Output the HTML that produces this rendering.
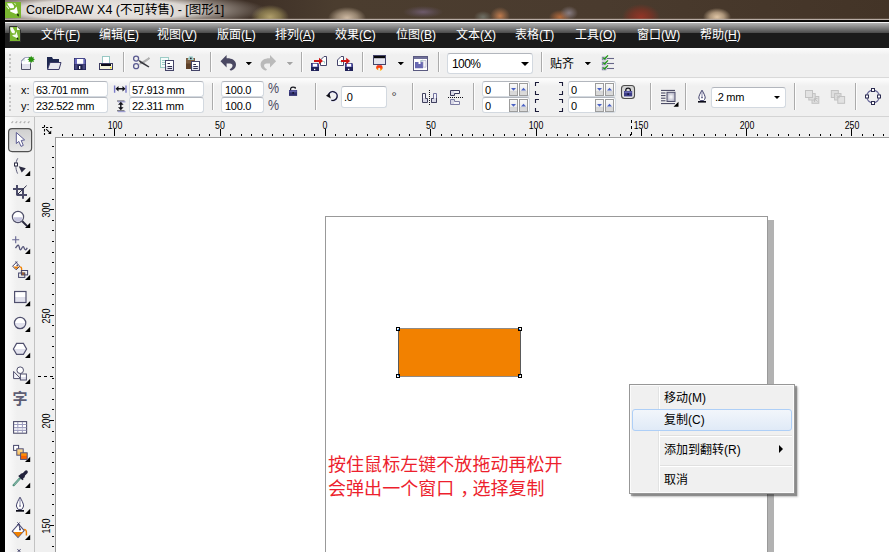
<!DOCTYPE html>
<html lang="zh-CN">
<head>
<meta charset="utf-8">
<title>CorelDRAW X4</title>
<style>
html,body{margin:0;padding:0;}
body{width:889px;height:552px;overflow:hidden;position:relative;background:#fff;font-family:"Liberation Sans","Noto Sans CJK SC",sans-serif;font-size:12px;color:#000;}
div,span,svg{position:absolute;box-sizing:border-box;}
svg{overflow:visible;}
#leftstrip{left:0;top:0;width:5px;height:552px;background:#000;}
#title{left:5px;top:0;width:884px;height:22px;overflow:hidden;background:
linear-gradient(rgba(0,0,0,0) 0,rgba(0,0,0,0) 18px,rgba(190,178,170,.35) 19px,#b8aca4 19px,#b8aca4 20px,#0c0a08 20px,#0c0a08 22px),
radial-gradient(ellipse 140px 17px at 100px 10px,rgba(240,236,232,.98) 0,rgba(232,228,224,.93) 62%,rgba(200,192,184,.55) 85%,rgba(120,105,95,0) 115%),
radial-gradient(ellipse 19px 12px at 265px 17px,rgba(196,178,118,.85) 0,rgba(170,155,95,.6) 55%,rgba(120,105,70,0) 100%),
radial-gradient(ellipse 19px 11px at 342px 18px,rgba(222,200,176,.9) 0,rgba(200,180,155,.6) 55%,rgba(120,105,90,0) 100%),
radial-gradient(ellipse 20px 6px at 418px 12px,rgba(118,98,122,.8) 0,rgba(100,84,100,.4) 60%,rgba(80,66,70,0) 100%),
radial-gradient(ellipse 10px 9px at 495px 16px,rgba(205,130,80,.9) 0,rgba(160,110,75,.5) 60%,rgba(90,70,50,0) 100%),
radial-gradient(ellipse 9px 6px at 478px 17px,rgba(120,125,115,.8) 0,rgba(90,85,75,0) 100%),
radial-gradient(ellipse 9px 7px at 564px 13px,rgba(150,140,150,.8) 0,rgba(90,80,80,0) 100%),
radial-gradient(ellipse 11px 7px at 555px 17px,rgba(190,110,60,.9) 0,rgba(120,80,50,0) 100%),
radial-gradient(ellipse 19px 13px at 636px 17px,rgba(150,52,38,.95) 0,rgba(128,50,36,.7) 55%,rgba(80,55,40,0) 100%),
radial-gradient(ellipse 14px 9px at 712px 17px,rgba(232,205,172,.95) 0,rgba(215,188,155,.7) 50%,rgba(110,90,70,0) 100%),
linear-gradient(90deg,#3d2f26 0,#3d2f26 240px,#4b3d2f 330px,#4a3b2e 600px,#46372a 760px,#433427 884px);}
#titletext{left:26px;top:2px;font-size:12.5px;line-height:17px;color:#000;white-space:nowrap;}
#menubar{left:5px;top:22px;width:884px;height:26px;background:linear-gradient(#f4f4f4 0,#f4f4f4 1px,#b2b2b2 1px,#4a4a4a 11px,#1b1b1b 11px,#1b1b1b 100%);}
.mi{top:27px;height:16px;line-height:16px;font-size:12px;color:#fff;white-space:nowrap;}
.mi u{text-underline-offset:1px;text-decoration-thickness:1px;}
#toolbar{left:5px;top:48px;width:884px;height:30px;background:linear-gradient(#fcfcfc,#f0f0f0 7px);border-bottom:1px solid #d9d9d9;}
#propbar{left:5px;top:78px;width:884px;height:39px;background:linear-gradient(#fcfcfc,#f0f0f0 7px);border-top:1px solid #fafafa;border-bottom:1px solid #d4d4d4}
#toolbox{left:5px;top:117px;width:30px;height:435px;background:linear-gradient(90deg,#fdfdfd,#f0f0f0 12px);border-right:1px solid #c2c2c2;}
#rulertop{left:35px;top:117px;width:854px;height:20px;background:#f0f0f0;}
#rulerleft{left:35px;top:137px;width:20px;height:415px;background:#f0f0f0;}
#canvas{left:55px;top:137px;width:834px;height:415px;background:#fff;border-left:1px solid #9c9c9c;border-top:1px solid #9c9c9c;}
.sep{width:2px;background:linear-gradient(90deg,#ababab 50%,#fdfdfd 50%);}
.inp{background:#fff;border:1px solid #d3d9e0;border-top-color:#b2b6bd;border-radius:3px;font-size:11px;line-height:14px;white-space:nowrap;overflow:hidden;letter-spacing:-0.3px;}
.inp span{left:2px;top:0px;}
.rl{font-size:10px;line-height:10px;color:#000;white-space:nowrap;}
.tri{width:0;height:0;border-left:3px solid transparent;border-right:3px solid transparent;border-top:3px solid #000;}
.fly{width:0;height:0;border-left:5px solid transparent;border-bottom:5px solid #000;}
.grip i{position:absolute;width:2px;height:2px;background:#c6c6c6;}
.cm{font-size:12px;line-height:16px;height:16px;white-space:nowrap;color:#000;}
</style>
</head>
<body>
<div id="title"></div>
<div id="titletext">CorelDRAW X4 (不可转售) - [图形1]</div>
<div id="menubar"></div>
<div class="mi" style="left:41px">文件(<u>F</u>)</div>
<div class="mi" style="left:99px">编辑(<u>E</u>)</div>
<div class="mi" style="left:157px">视图(<u>V</u>)</div>
<div class="mi" style="left:217px">版面(<u>L</u>)</div>
<div class="mi" style="left:275px">排列(<u>A</u>)</div>
<div class="mi" style="left:335px">效果(<u>C</u>)</div>
<div class="mi" style="left:396px">位图(<u>B</u>)</div>
<div class="mi" style="left:456px">文本(<u>X</u>)</div>
<div class="mi" style="left:515px">表格(<u>T</u>)</div>
<div class="mi" style="left:575px">工具(<u>O</u>)</div>
<div class="mi" style="left:637px">窗口(<u>W</u>)</div>
<div class="mi" style="left:700px">帮助(<u>H</u>)</div>
<div id="toolbar"></div>
<div id="propbar"></div>
<div id="toolbox"></div>
<div id="rulertop"></div>
<div id="rulerleft"></div>
<div id="canvas"></div>
<div class="sep" style="left:123px;top:52px;height:20px"></div>
<div class="sep" style="left:210px;top:52px;height:20px"></div>
<div class="sep" style="left:301px;top:52px;height:20px"></div>
<div class="sep" style="left:362px;top:52px;height:20px"></div>
<div class="sep" style="left:438px;top:52px;height:20px"></div>
<div class="sep" style="left:541px;top:52px;height:20px"></div>
<div class="sep" style="left:212px;top:83px;height:27px"></div>
<div class="sep" style="left:315px;top:83px;height:27px"></div>
<div class="sep" style="left:412px;top:83px;height:27px"></div>
<div class="sep" style="left:473px;top:83px;height:27px"></div>
<div class="sep" style="left:650px;top:83px;height:27px"></div>
<div class="sep" style="left:685px;top:83px;height:27px"></div>
<div class="sep" style="left:794px;top:83px;height:27px"></div>
<div class="sep" style="left:855px;top:83px;height:27px"></div>
<div class="grip" style="left:9px;top:0"><i style="left:0;top:54px"></i><i style="left:0;top:58px"></i><i style="left:0;top:62px"></i><i style="left:0;top:66px"></i><i style="left:0;top:70px"></i><i style="left:0;top:85px"></i><i style="left:0;top:89px"></i><i style="left:0;top:93px"></i><i style="left:0;top:97px"></i><i style="left:0;top:101px"></i><i style="left:0;top:105px"></i><i style="left:0;top:109px"></i></div>
<div class="inp" style="left:447px;top:53px;width:86px;height:21px;font-size:12px"><span style="left:4px;top:3px;letter-spacing:-0.6px">100%</span></div>
<div class="tri" style="left:521px;top:62px;border-left-width:4px;border-right-width:4px;border-top-width:4px"></div>
<div style="left:550px;top:56px;line-height:16px;font-size:12px;white-space:nowrap">贴齐</div>
<div class="tri" style="left:246px;top:62px;border-top-color:#000"></div>
<div class="tri" style="left:287px;top:62px;border-top-color:#a0a0a0"></div>
<div class="tri" style="left:398px;top:62px;border-top-color:#000"></div>
<div class="tri" style="left:585px;top:62px;border-top-color:#000"></div>
<div style="left:21px;top:83px;font-size:11px;line-height:14px">x:</div>
<div style="left:21px;top:99px;font-size:11px;line-height:14px">y:</div>
<div class="inp" style="left:33px;top:81px;width:75px;height:16px;font-size:11px"><span style="left:2px;top:1px">63.701 mm</span></div>
<div class="inp" style="left:33px;top:97px;width:75px;height:16px;font-size:11px"><span style="left:2px;top:1px">232.522 mm</span></div>
<div class="inp" style="left:129px;top:81px;width:75px;height:16px;font-size:11px"><span style="left:2px;top:1px">57.913 mm</span></div>
<div class="inp" style="left:129px;top:97px;width:75px;height:16px;font-size:11px"><span style="left:2px;top:1px">22.311 mm</span></div>
<div class="inp" style="left:221px;top:81px;width:43px;height:16px;font-size:11px"><span style="left:3px;top:1px">100.0</span></div>
<div class="inp" style="left:221px;top:97px;width:43px;height:16px;font-size:11px"><span style="left:3px;top:1px">100.0</span></div>
<div style="left:267.5px;top:81px;font-size:14.5px;line-height:15px;color:#4c4c62;transform:scaleX(.86);transform-origin:0 50%">%</div>
<div style="left:267.5px;top:98px;font-size:14.5px;line-height:15px;color:#4c4c62;transform:scaleX(.86);transform-origin:0 50%">%</div>
<div class="inp" style="left:341px;top:86px;width:46px;height:22px;font-size:11px"><span style="left:2px;top:2.5px">.0</span></div>
<div style="left:391.5px;top:89px;font-size:13px;line-height:15px;color:#444">°</div>
<div class="inp" style="left:482px;top:81px;width:48px;height:16px;font-size:11px"><span style="left:2px;top:1px">0</span></div>
<div class="inp" style="left:482px;top:97px;width:48px;height:16px;font-size:11px"><span style="left:2px;top:1px">0</span></div>
<div class="inp" style="left:568px;top:81px;width:48px;height:16px;font-size:11px"><span style="left:2px;top:1px">0</span></div>
<div class="inp" style="left:568px;top:97px;width:48px;height:16px;font-size:11px"><span style="left:2px;top:1px">0</span></div>
<div class="inp" style="left:711px;top:87px;width:75px;height:21px;font-size:11px"><span style="left:3px;top:1.5px">.2 mm</span></div>
<div class="tri" style="left:774px;top:96px;border-left-width:3.5px;border-right-width:3.5px;border-top-width:3.5px"></div>
<svg style="left:0;top:0" width="889" height="552"><path d="M62 134h1v2h-1zM72 134h1v2h-1zM83 134h1v2h-1zM93 134h1v2h-1zM104 134h1v2h-1zM114 129h1v7h-1zM125 134h1v2h-1zM135 134h1v2h-1zM146 134h1v2h-1zM156 134h1v2h-1zM167 134h1v2h-1zM177 134h1v2h-1zM188 134h1v2h-1zM199 134h1v2h-1zM209 134h1v2h-1zM220 129h1v7h-1zM230 134h1v2h-1zM241 134h1v2h-1zM251 134h1v2h-1zM262 134h1v2h-1zM272 134h1v2h-1zM283 134h1v2h-1zM293 134h1v2h-1zM304 134h1v2h-1zM314 134h1v2h-1zM325 129h1v7h-1zM335 134h1v2h-1zM346 134h1v2h-1zM356 134h1v2h-1zM367 134h1v2h-1zM378 134h1v2h-1zM388 134h1v2h-1zM399 134h1v2h-1zM409 134h1v2h-1zM420 134h1v2h-1zM430 129h1v7h-1zM441 134h1v2h-1zM451 134h1v2h-1zM462 134h1v2h-1zM472 134h1v2h-1zM483 134h1v2h-1zM493 134h1v2h-1zM504 134h1v2h-1zM514 134h1v2h-1zM525 134h1v2h-1zM536 129h1v7h-1zM546 134h1v2h-1zM557 134h1v2h-1zM567 134h1v2h-1zM578 134h1v2h-1zM588 134h1v2h-1zM599 134h1v2h-1zM609 134h1v2h-1zM620 134h1v2h-1zM630 134h1v2h-1zM641 129h1v7h-1zM651 134h1v2h-1zM662 134h1v2h-1zM672 134h1v2h-1zM683 134h1v2h-1zM693 134h1v2h-1zM704 134h1v2h-1zM715 134h1v2h-1zM725 134h1v2h-1zM736 134h1v2h-1zM746 129h1v7h-1zM757 134h1v2h-1zM767 134h1v2h-1zM778 134h1v2h-1zM788 134h1v2h-1zM799 134h1v2h-1zM809 134h1v2h-1zM820 134h1v2h-1zM830 134h1v2h-1zM841 134h1v2h-1zM851 129h1v7h-1zM862 134h1v2h-1zM873 134h1v2h-1zM883 134h1v2h-1zM52 146h2v1h-2zM52 157h2v1h-2zM52 167h2v1h-2zM52 178h2v1h-2zM52 188h2v1h-2zM52 199h2v1h-2zM50 209h4v1h-4zM52 220h2v1h-2zM52 230h2v1h-2zM52 241h2v1h-2zM52 252h2v1h-2zM52 262h2v1h-2zM52 273h2v1h-2zM52 283h2v1h-2zM52 294h2v1h-2zM52 304h2v1h-2zM50 315h4v1h-4zM52 325h2v1h-2zM52 336h2v1h-2zM52 346h2v1h-2zM52 357h2v1h-2zM52 367h2v1h-2zM52 378h2v1h-2zM52 388h2v1h-2zM52 399h2v1h-2zM52 409h2v1h-2zM50 420h4v1h-4zM52 431h2v1h-2zM52 441h2v1h-2zM52 452h2v1h-2zM52 462h2v1h-2zM52 473h2v1h-2zM52 483h2v1h-2zM52 494h2v1h-2zM52 504h2v1h-2zM52 515h2v1h-2zM50 525h4v1h-4zM52 536h2v1h-2zM52 546h2v1h-2z" fill="#000"/><path d="M631.5 120v15" stroke="#000" stroke-width="1" stroke-dasharray="3 3" fill="none"/><path d="M38 376.5h15" stroke="#000" stroke-width="1" stroke-dasharray="3 3" fill="none"/></svg>
<div class="rl" style="left:99.8px;top:121px;width:30px;text-align:center;transform:scaleX(.88)">100</div>
<div class="rl" style="left:205.1px;top:121px;width:30px;text-align:center;transform:scaleX(.88)">50</div>
<div class="rl" style="left:310.4px;top:121px;width:30px;text-align:center;transform:scaleX(.88)">0</div>
<div class="rl" style="left:415.7px;top:121px;width:30px;text-align:center;transform:scaleX(.88)">50</div>
<div class="rl" style="left:521px;top:121px;width:30px;text-align:center;transform:scaleX(.88)">100</div>
<div class="rl" style="left:626.3px;top:121px;width:30px;text-align:center;transform:scaleX(.88)">150</div>
<div class="rl" style="left:731.6px;top:121px;width:30px;text-align:center;transform:scaleX(.88)">200</div>
<div class="rl" style="left:837px;top:121px;width:30px;text-align:center;transform:scaleX(.88)">250</div>
<div class="rl" style="left:32px;top:205.3px;width:30px;height:10px;text-align:center;transform:rotate(-90deg) scaleX(.9)">300</div>
<div class="rl" style="left:32px;top:310.6px;width:30px;height:10px;text-align:center;transform:rotate(-90deg) scaleX(.9)">250</div>
<div class="rl" style="left:32px;top:415.9px;width:30px;height:10px;text-align:center;transform:rotate(-90deg) scaleX(.9)">200</div>
<div class="rl" style="left:32px;top:521.2px;width:30px;height:10px;text-align:center;transform:rotate(-90deg) scaleX(.9)">150</div>
<div style="left:768px;top:220px;width:6px;height:332px;background:#b2b2b2"></div>
<div style="left:325px;top:216px;width:443px;height:340px;border:1px solid #999;background:#fff"></div>
<div style="left:398px;top:328px;width:123px;height:49px;background:#f28100;border:1px solid #5a5a5a;border-top-color:#908a84;border-bottom-color:#908a84"></div>
<div style="left:396px;top:327px;width:4px;height:4px;background:#000"><div style="left:1px;top:1px;width:2px;height:2px;background:#e8e8e8"><div style="left:1px;top:1px;width:1px;height:1px;background:#1e8cff"></div><div style="left:0px;top:0px;width:1px;height:1px;background:#fff"></div></div></div>
<div style="left:518px;top:327px;width:4px;height:4px;background:#000"><div style="left:1px;top:1px;width:2px;height:2px;background:#e8e8e8"><div style="left:0px;top:1px;width:1px;height:1px;background:#1e8cff"></div><div style="left:1px;top:0px;width:1px;height:1px;background:#fff"></div></div></div>
<div style="left:396px;top:374px;width:4px;height:4px;background:#000"><div style="left:1px;top:1px;width:2px;height:2px;background:#e8e8e8"><div style="left:1px;top:0px;width:1px;height:1px;background:#1e8cff"></div><div style="left:0px;top:1px;width:1px;height:1px;background:#fff"></div></div></div>
<div style="left:518px;top:374px;width:4px;height:4px;background:#000"><div style="left:1px;top:1px;width:2px;height:2px;background:#e8e8e8"><div style="left:0px;top:0px;width:1px;height:1px;background:#1e8cff"></div><div style="left:1px;top:1px;width:1px;height:1px;background:#fff"></div></div></div>
<div style="left:328px;top:453px;font-size:18px;line-height:24px;color:#ed1f2e;white-space:nowrap;letter-spacing:0.05px">按住鼠标左键不放拖动再松开<br>会弹出一个窗口<i style="position:relative;left:6px;font-style:normal">，</i>选择复制</div>
<div style="left:629px;top:384px;width:166px;height:110px;background:#f0f0f0;border:1px solid #979797;box-shadow:inset 0 0 0 1px #fbfbfb,2px 2px 1px rgba(0,0,0,.32),3px 3px 2px rgba(0,0,0,.2)"></div>
<div style="left:658px;top:387px;width:2px;height:104px;background:linear-gradient(90deg,#e2e3e3 50%,#fff 50%)"></div>
<div style="left:632px;top:409px;width:160px;height:22px;border:1px solid #aecff7;border-radius:3px;background:linear-gradient(#f2f6fb,#e0eaf7)"></div>
<div style="left:660px;top:435px;width:132px;height:2px;background:linear-gradient(#e0e0e0 50%,#fff 50%)"></div>
<div style="left:660px;top:465px;width:132px;height:2px;background:linear-gradient(#e0e0e0 50%,#fff 50%)"></div>
<div class="cm" style="left:664px;top:390px">移动(M)</div>
<div class="cm" style="left:664px;top:412px">复制(C)</div>
<div class="cm" style="left:664px;top:441.5px">添加到翻转(R)</div>
<div class="cm" style="left:664px;top:471.5px">取消</div>
<div style="left:779px;top:445px;width:0;height:0;border-top:4px solid transparent;border-bottom:4px solid transparent;border-left:4px solid #000"></div>
<svg style="left:0;top:0" width="889" height="552" viewBox="0 0 889 552">
<defs>
<linearGradient id="gpage" x1="0" y1="0" x2="0" y2="1"><stop offset="0" stop-color="#fff"/><stop offset=".5" stop-color="#fff"/><stop offset=".5" stop-color="#e0e0ec"/><stop offset="1" stop-color="#e4e4ee"/></linearGradient>
<linearGradient id="gflame" x1="0" y1="0" x2="0" y2="1"><stop offset="0" stop-color="#f01810"/><stop offset=".55" stop-color="#fa5a10"/><stop offset="1" stop-color="#ffd020"/></linearGradient>
<linearGradient id="gspin" x1="0" y1="0" x2="0" y2="1"><stop offset="0" stop-color="#fafafa"/><stop offset=".6" stop-color="#ececec"/><stop offset=".62" stop-color="#d6d6d6"/><stop offset="1" stop-color="#dcdcdc"/></linearGradient>
<linearGradient id="gbtn" x1="0" y1="0" x2="0" y2="1"><stop offset="0" stop-color="#cfcfcf"/><stop offset="1" stop-color="#e8e8e8"/></linearGradient>
<radialGradient id="gwrap"><stop offset="0" stop-color="#fff"/><stop offset="1" stop-color="#b8b8c8"/></radialGradient>
<linearGradient id="gor" x1="0" y1="0" x2="0" y2="1"><stop offset="0" stop-color="#ff9a10"/><stop offset=".5" stop-color="#ff8000"/><stop offset=".5" stop-color="#f85c00"/><stop offset="1" stop-color="#f86800"/></linearGradient>
<linearGradient id="gor2" x1="0" y1="0" x2="0" y2="1"><stop offset="0" stop-color="#fde0a0"/><stop offset="1" stop-color="#f8b850"/></linearGradient>
</defs>
<!-- title icon -->
<g transform="translate(5,2)">
<rect width="16" height="16" fill="#7ab630"/>
<path d="M2.3 1.3H7L9 4.1L8.8 5.9L5.1 6.3L2.3 1.9Z M1.2 3.9L1.8 3.5L4.2 6.5L3.6 7.2Z M9.2 1.3L9.9 1.1L11 2.4L10.3 2.8Z M5.1 8.3L9.2 7.6L11.6 4.6L12.9 10.7L11 12L5.1 9.6Z" fill="#fff"/>
<path d="M11.8 12.2L13.6 11.8L14 14.6L12.6 13.9Z" fill="#1a2a10"/>
</g>
<!-- menu doc icon -->
<g transform="translate(9,26)">
<path d="M.5 .5H8L11.5 4V15.5H.5Z" fill="#7ab630" stroke="#303030" stroke-width="1"/>
<path d="M8 .8V4H11.2Z" fill="#fff"/>
<path d="M1.2 1.5L3.5 1.2L6 5.5L5.5 7.5L3 7L1.5 4Z M3.5 9L6.5 8.5L7.5 5.5L9 11L7.8 12L3.5 10Z" fill="#fff" opacity=".95"/>
<path d="M7.6 12.2L9 11.6L9.6 13.8L8.2 13.4Z" fill="#142008"/>
</g>
<!-- toolbar: new -->
<path d="M21.5 61L25 57.5H30.5V69.5H21.5Z" fill="url(#gpage)" stroke="#505068" stroke-width="1"/>
<path d="M21.5 63.5V61L25 57.5H30.5V63.5" fill="none" stroke="#a4a4c4" stroke-width="1"/>
<path d="M22.3 61.2H25.2V58.3Z" fill="#d8ece8"/>
<path d="M31.2 55.8l.9 1.6 1.7-.7-.5 1.8 1.7.8-1.6.9.5 1.8-1.8-.5-.9 1.6-.9-1.6-1.8.5.5-1.8-1.6-.9 1.7-.8-.5-1.8 1.7.7z" fill="#2a9410"/>
<!-- open -->
<path d="M47 57H52L53 59H59V63H50L47.5 69.5H47Z" fill="#1e2850"/>
<path d="M50 62.5H61L59 69.5H47.6Z" fill="#e8e8f0" stroke="#3a3a68" stroke-width="1"/>
<!-- save -->
<path d="M74 58H84.5L86 59.5V70H74Z" fill="#22245a"/>
<path d="M74.6 58.6H84.3L85.4 59.8V64H74.6Z" fill="#6a6abc"/>
<rect x="77" y="59" width="6.3" height="4.8" fill="#fff"/>
<rect x="74.8" y="64.3" width="10.4" height="5" fill="#484880"/>
<rect x="77.5" y="65" width="5" height="5" fill="#1c1e48"/>
<rect x="79" y="66" width="1.3" height="3" fill="#fff"/>
<!-- print -->
<rect x="102.5" y="56.5" width="7" height="8" fill="#fff" stroke="#98c8c4" stroke-width="1"/>
<rect x="99.5" y="63.5" width="13" height="6" fill="#f2f2dc" stroke="#3c3c62" stroke-width="1"/>
<rect x="101" y="64" width="10" height="2" fill="#0c0c18"/>
<rect x="110" y="67" width="1.4" height="1.4" fill="#f0d000"/>
<!-- scissors -->
<circle cx="136.1" cy="58.6" r="2.5" fill="none" stroke="#5a5a90" stroke-width="1.3"/>
<circle cx="136.1" cy="66.2" r="2.5" fill="none" stroke="#5a5a90" stroke-width="1.3"/>
<path d="M138.2 64.8L140.6 62.4L148.6 57.4L149.4 58.6L141.2 64.2Z" fill="#b0b0b0"/>
<path d="M148.6 57.2L149.6 58.8L143 63.4" fill="none" stroke="#8c8c8c" stroke-width=".6"/>
<path d="M138.2 60.5L139.8 60.2L149.4 66.5L148.6 67.6L140.2 62.8Z" fill="#38383f"/>
<!-- copy -->
<rect x="160.5" y="57.5" width="8" height="10" fill="#f4fbfa" stroke="#9cccc6" stroke-width="1"/>
<path d="M162 60.5h4M162 62.5h3M162 64.5h3" stroke="#9cccc6" stroke-width="1"/>
<rect x="165.5" y="60.5" width="8" height="10" fill="url(#gpage)" stroke="#444468" stroke-width="1"/>
<path d="M167.5 63.5h2.5M167.5 66.5h4.5M167.5 68.5h4.5" stroke="#303050" stroke-width="1"/>
<!-- paste -->
<rect x="186" y="58" width="9" height="11" fill="#5e4028"/>
<rect x="186" y="58" width="9" height="5.5" fill="#7c5c40"/>
<path d="M187.6 60L189 56.2H192.6L194 60Z" fill="#a4d2cd"/>
<circle cx="190.8" cy="58.4" r=".9" fill="#202030"/>
<rect x="191.5" y="61.5" width="8" height="9" fill="url(#gpage)" stroke="#444468" stroke-width="1"/>
<path d="M193.3 64.5h2.7M193.3 66.5h4.5M193.3 68.5h4.5" stroke="#303050" stroke-width="1.1"/>
<!-- undo / redo -->
<path id="undo" d="M220.5 61.3L226.6 55V58.3C231 58 236 60 236 64.5C236 68 233 70.3 230.5 70.6L229.6 69.2C231.5 68.4 232.8 66.8 232.5 65C232 63.4 229 63.3 226.6 63.6V67.5Z" fill="#4a4862"/>
<path d="M220.5 61.3L226.6 55V58.3C231 58 236 60 236 64.5C236 68 233 70.3 230.5 70.6L229.6 69.2C231.5 68.4 232.8 66.8 232.5 65C232 63.4 229 63.3 226.6 63.6V67.5Z" fill="#bababa" transform="translate(496.6,0) scale(-1,1)"/>
<path d="M246 62h5l-2.5 3z M398 62h5l-2.5 3z M585 62h5l-2.5 3z" fill="#000"/>
<path d="M287 62h5l-2.5 3z" fill="#a4a4a4"/>
<!-- import -->
<g id="flop">
<path d="M311 63H318L319 64V71H311Z" fill="#20225a"/>
<path d="M311.6 63.6H317.8L318.4 64.3V67H311.6Z" fill="#6464b4"/>
<rect x="313" y="63.8" width="4" height="2.8" fill="#fff"/>
<rect x="314" y="68.8" width="1.3" height="1.3" fill="#fff"/>
</g>
<path d="M320.5 60L324 56.5H326.5V65.5H320.5Z" fill="#fff" stroke="#46466c" stroke-width="1"/>
<path d="M322.5 61.5h2v2" fill="none" stroke="#a0d0cc" stroke-width="1"/>
<path d="M314 60h5v-2.2l4 3.2-4 3.2v-2.2h-5z" fill="#cc1414"/>
<!-- export -->
<path d="M337.5 60L341 56.5H343.5V65.5H337.5Z" fill="#fff" stroke="#46466c" stroke-width="1"/>
<path d="M339.5 61.5h2v2" fill="none" stroke="#a0d0cc" stroke-width="1"/>
<g transform="translate(34,0)">
<path d="M311 63H318L319 64V71H311Z" fill="#20225a"/>
<path d="M311.6 63.6H317.8L318.4 64.3V67H311.6Z" fill="#6464b4"/>
<rect x="313" y="63.8" width="4" height="2.8" fill="#fff"/>
<rect x="314" y="68.8" width="1.3" height="1.3" fill="#fff"/>
</g>
<path d="M341 60h5.2v-2.2l4 3.2-4 3.2v-2.2h-5.2z" fill="#cc1414"/>
<!-- app launcher -->
<rect x="373.5" y="55.5" width="12" height="9" fill="#e4e4ee" stroke="#44446a" stroke-width="1"/>
<rect x="374" y="56" width="11" height="2.2" fill="#08080c"/>
<path d="M377.5 65.2C375.5 66.5 375.5 69.5 378.5 70.2C377.8 69 378.2 68 379.3 67.8C380.6 68.3 380.5 69.8 379.6 70.8C382.5 70.6 383.8 67.5 381.6 65.2Z" fill="url(#gflame)"/>
<!-- welcome -->
<rect x="413.5" y="56.5" width="14" height="14" fill="#fff" stroke="#5a5a80" stroke-width="1"/>
<rect x="414" y="57" width="13" height="2" fill="#70709a"/>
<path d="M415 62H418.5V64H420.5V62H423V68.2H415Z" fill="#6868b2"/>
<path d="M420.5 60.5H426V67.2H423.2V61.8H420.5Z" fill="#f4f4fa" stroke="#a8a8c0" stroke-width=".6"/>
<path d="M420.8 61.5L422.5 60.2" stroke="#90c8c0" stroke-width="1"/>
<!-- checklist -->
<g id="chk">
<rect x="602.3" y="57.2" width="3.6" height="2.6" fill="#fff" stroke="#7c7ca4" stroke-width=".9"/>
<path d="M607 58.5h7" stroke="#666688" stroke-width="1.1"/>
<path d="M603 57.8L604.6 59L608 55.4" fill="none" stroke="#1c9a10" stroke-width="1.3"/>
</g>
<g transform="translate(0,5)">
<rect x="602.3" y="57.2" width="3.6" height="2.6" fill="#fff" stroke="#7c7ca4" stroke-width=".9"/>
<path d="M607 58.5h7" stroke="#666688" stroke-width="1.1"/>
<path d="M603 57.8L604.6 59L608 55.4" fill="none" stroke="#1c9a10" stroke-width="1.3"/>
</g>
<g transform="translate(0,10)">
<rect x="602.3" y="57.2" width="3.6" height="2.6" fill="#fff" stroke="#7c7ca4" stroke-width=".9"/>
<path d="M607 58.5h7" stroke="#666688" stroke-width="1.1"/>
<path d="M603 57.8L604.6 59L608 55.4" fill="none" stroke="#1c9a10" stroke-width="1.3"/>
</g>
</svg>
<svg style="left:0;top:0" width="889" height="552" viewBox="0 0 889 552">
<!-- width icon -->
<path d="M114.6 85.5v7.2M126 85.5v7.2" stroke="#7878c8" stroke-width="1.4"/>
<path d="M115.5 88.8l3-2.8v2.1h4v-2.1l3 2.8-3 2.8v-2.1h-4v2.1z" fill="#101018"/>
<!-- height icon -->
<path d="M117 101h7.5M117 110.8h7.5" stroke="#50505a" stroke-width="1"/>
<path d="M118 101.9h7.5M118 111.7h7.5" stroke="#8c8cd0" stroke-width=".9"/>
<path d="M120.8 101.8l2.8 3h-2.1v2.4h2.1l-2.8 3-2.8-3h2.1v-2.4h-2.1z" fill="#101018"/>
<!-- unlock -->
<rect x="289" y="90" width="8.1" height="5.9" fill="#30306e"/>
<rect x="289.4" y="90.3" width="7.3" height="2" fill="#5e5ea6"/>
<rect x="292.4" y="92.2" width="1.6" height="1.4" fill="#0c0c20"/>
<path d="M290.6 90.2V88.8C290.8 87.4 292 87 293.2 87.1L295.2 87.4V88.8" fill="none" stroke="#101018" stroke-width="1.2"/>
<!-- rotate -->
<path d="M328.7 94.4A4.4 4.4 0 1 1 331.4 100.2" fill="none" stroke="#8484d4" stroke-width="1.6"/>
<path d="M328.7 94.4A4.4 4.4 0 1 1 331.4 100.2" fill="none" stroke="#141420" stroke-width="1.1"/>
<path d="M326 95.7L329.4 93L330.8 98.4Z" fill="#101018"/>
<!-- mirror H -->
<path d="M429.5 90V105" stroke="#101018" stroke-width="1" stroke-dasharray="1 1"/>
<path d="M422.5 93.5H425.5V98.5H427.5V102.5H422.5Z" fill="#f4f4f9" stroke="#40405e" stroke-width="1"/>
<rect x="423" y="98" width="2" height="4" fill="#d8d8e6"/>
<rect x="425" y="99" width="2" height="3" fill="#d8d8e6"/>
<path d="M436.5 93.5H433.5V98.5H431.5V102.5H436.5Z" fill="#f4f4f9" stroke="#7474a0" stroke-width="1"/>
<rect x="434" y="98" width="2" height="4" fill="#d8d8e6"/>
<rect x="432" y="99" width="2" height="3" fill="#d8d8e6"/>
<path d="M433.5 98.5H431.5V102.5H436.5V98" fill="none" stroke="#40405e" stroke-width="1"/>
<!-- mirror V -->
<path d="M448 97.5H463" stroke="#101018" stroke-width="1" stroke-dasharray="1 1"/>
<path d="M450.5 90.5H459.5V93.5H454.5V95.5H450.5Z" fill="#f4f4f9" stroke="#38385a" stroke-width="1"/>
<rect x="451" y="91" width="3" height="4" fill="#d8d8e6"/>
<path d="M450.5 104.5H459.5V101.5H454.5V99.5H450.5Z" fill="#f4f4f9" stroke="#7c7ca2" stroke-width="1"/>
<rect x="451" y="100" width="3" height="4" fill="#d8d8e6"/>
<!-- spinner buttons -->
<g id="spin">
<rect x="509.5" y="83.5" width="8" height="12" fill="url(#gspin)" stroke="#9c9c9c" stroke-width="1"/>
<rect x="519.5" y="83.5" width="8" height="12" fill="url(#gspin)" stroke="#9c9c9c" stroke-width="1"/>
<path d="M511 88h5l-2.5 2.8z" fill="#4a62c4"/>
<path d="M521 90.6h5l-2.5 -2.8z" fill="#4a62c4"/>
</g>
<g transform="translate(0,16)">
<rect x="509.5" y="83.5" width="8" height="12" fill="url(#gspin)" stroke="#9c9c9c" stroke-width="1"/>
<rect x="519.5" y="83.5" width="8" height="12" fill="url(#gspin)" stroke="#9c9c9c" stroke-width="1"/>
<path d="M511 88h5l-2.5 2.8z" fill="#4a62c4"/>
<path d="M521 90.6h5l-2.5 -2.8z" fill="#4a62c4"/>
</g>
<g transform="translate(86,0)">
<rect x="509.5" y="83.5" width="8" height="12" fill="url(#gspin)" stroke="#9c9c9c" stroke-width="1"/>
<rect x="519.5" y="83.5" width="8" height="12" fill="url(#gspin)" stroke="#9c9c9c" stroke-width="1"/>
<path d="M511 88h5l-2.5 2.8z" fill="#4a62c4"/>
<path d="M521 90.6h5l-2.5 -2.8z" fill="#4a62c4"/>
</g>
<g transform="translate(86,16)">
<rect x="509.5" y="83.5" width="8" height="12" fill="url(#gspin)" stroke="#9c9c9c" stroke-width="1"/>
<rect x="519.5" y="83.5" width="8" height="12" fill="url(#gspin)" stroke="#9c9c9c" stroke-width="1"/>
<path d="M511 88h5l-2.5 2.8z" fill="#4a62c4"/>
<path d="M521 90.6h5l-2.5 -2.8z" fill="#4a62c4"/>
</g>
<!-- corner marks -->
<g id="cm">
<path d="M535.5 86V82.5H539M559 82.5H562.5V86M535.5 91V94.5H539M559 94.5H562.5V91" fill="none" stroke="#1a1a38" stroke-width="1.1"/>
</g>
<g transform="translate(0,17)">
<path d="M535.5 86V82.5H539M559 82.5H562.5V86M535.5 91V94.5H539M559 94.5H562.5V91" fill="none" stroke="#1a1a38" stroke-width="1.1"/>
</g>
<!-- lock button -->
<rect x="621.5" y="85.5" width="13" height="13" rx="3" fill="url(#gbtn)" stroke="#4c4c4c" stroke-width="1.1"/>
<rect x="624" y="91" width="8.2" height="5.4" fill="#3c3c86"/>
<rect x="624.5" y="91.4" width="7.2" height="1.6" fill="#6868b0"/>
<rect x="627.4" y="93.4" width="1.5" height="1.4" fill="#0c0c20"/>
<path d="M625.8 91V89.8C626 87.6 630.2 87.6 630.4 89.8V91" fill="none" stroke="#101018" stroke-width="1.3"/>
<!-- wrap -->
<path d="M661 90.4h14M661 103.6h14M661 93h4.5M661 95.6h4.5M661 98.2h4.5M661 100.8h4.5" stroke="#3c3c58" stroke-width="1"/>
<rect x="667" y="92.3" width="8" height="9.2" fill="url(#gwrap)" stroke="#50506c" stroke-width="1"/>
<path d="M673.5 106.7h5v-5z" fill="#000"/>
<!-- pen nib -->
<g id="nib">
<path d="M702 90.2C700.6 92.5 698.7 96 698.8 98C699 99.3 700 100 700.4 100.6H703.6C704 100 705 99.3 705.2 98C705.3 96 703.4 92.5 702 90.2Z" fill="#fff" stroke="#40406a" stroke-width="1"/>
<path d="M702 91.5V97" stroke="#6a6a94" stroke-width=".8"/>
<circle cx="702" cy="97.6" r=".8" fill="#40406a"/>
<rect x="698" y="101" width="8" height="1.6" fill="#0c0c18"/>
</g>
<!-- to front / to back (disabled) -->
<g fill="#dedede" stroke="#c2c2c2" stroke-width="1">
<rect x="812" y="96.5" width="6.8" height="6.8"/>
<rect x="808.8" y="93.6" width="6.4" height="6.4"/>
<rect x="805.5" y="90.5" width="7" height="7" fill="#e2e2e2"/>
<rect x="831.3" y="90.5" width="7" height="7"/>
<rect x="834.6" y="93.6" width="6.4" height="6.4"/>
<rect x="837.8" y="96.5" width="6.8" height="6.8" fill="#e2e2e2"/>
</g>
<path d="M814.5 102v-3.5h3M814.8 98.8l2.8 2.8" fill="none" stroke="#bdbdbd" stroke-width=".9"/>
<path d="M836 94.5l3 3M839.3 95v2.8h-2.8" fill="none" stroke="#c4c4c4" stroke-width=".9"/>
<!-- convert to curves -->
<circle cx="873" cy="96.5" r="6.3" fill="none" stroke="#6a6a9a" stroke-width="1.2"/>
<g fill="#fff" stroke="#2c2c50" stroke-width="1">
<rect x="871.5" y="88.5" width="3" height="3"/>
<rect x="871.5" y="101.5" width="3" height="3"/>
<rect x="865.5" y="95" width="3" height="3"/>
<rect x="877.5" y="95" width="3" height="3"/>
</g>
<!-- ruler origin icon -->
<path d="M42 127.5h2.4M46 127.5h2.2M50 127.5h2.2M44.5 125v2M44.5 129v2.6M44.5 133v2" stroke="#000" stroke-width="1.1" fill="none"/>
<path d="M46.2 129.2L50.2 133.2" stroke="#000" stroke-width="1.1"/>
<path d="M48 134h3.2v-3.4z" fill="#000"/>
</svg>
<svg style="left:0;top:0" width="889" height="552" viewBox="0 0 889 552">
<!-- toolbox grip -->
<path d="M11.5 123l1.6-1.6M15.6 123l1.6-1.6M19.7 123l1.6-1.6M23.8 123l1.6-1.6M27.9 123l1.6-1.6" stroke="#b0b0b0" stroke-width="1.3"/>
<!-- select button -->
<rect x="8.6" y="128.6" width="23" height="23" rx="3.5" fill="url(#gbtn)" stroke="#505050" stroke-width="1.2"/>
<path d="M16.3 132.5V143.6L18.8 141.4L21 146.4L23.3 145.4L21.2 140.5L24.6 139.9Z" fill="#fff" stroke="#5c5c92" stroke-width="1"/>
<!-- flyout triangles -->
<path d="M25 176h5.2v-5.2zM25 202h5.2v-5.2zM25 228h5.2v-5.2zM25 254h5.2v-5.2zM25 280h5.2v-5.2zM25 306.3h5.2v-5.2zM25 332h5.2v-5.2zM25 358h5.2v-5.2zM25 384h5.2v-5.2zM25 462h5.2v-5.2zM25 488h5.2v-5.2zM25 514h5.2v-5.2zM25 540h5.2v-5.2z" fill="#000"/>
<!-- shape tool -->
<path d="M17.8 158.3C15.2 162 15.2 169 17.6 173.6" fill="none" stroke="#62627e" stroke-width="1"/>
<rect x="14.5" y="163" width="3" height="3" fill="#fff" stroke="#2c2c44" stroke-width="1"/>
<path d="M18.7 166.2L25.8 168.2L21.7 172.4Z" fill="#2a2a40"/>
<!-- crop -->
<path d="M13 189h11M17 185v10.6M17 195h10M23 189v9.8" stroke="#4a4a68" stroke-width="2" fill="none"/>
<path d="M17.8 194.2L26.6 185.6" stroke="#2a2a44" stroke-width="1"/>
<!-- zoom -->
<circle cx="18" cy="217" r="5.6" fill="#fff" stroke="#50506a" stroke-width="1.2"/>
<path d="M13.6 217.3h8.8a4.4 4.4 0 0 1 -8.8 0z" fill="#c4c4de"/>
<path d="M22.3 221.3L27.4 226.4" stroke="#2c2c40" stroke-width="2"/>
<!-- freehand -->
<path d="M15.7 236.2v7M12.2 239.7h7" stroke="#666692" stroke-width="1.1"/>
<path d="M15.5 248.2C16.5 246.5 17.6 244.8 18.6 245.4C19.6 246.2 19.2 249.6 20.4 249.8C21.6 249.8 22 246.4 23.2 246.6C24.2 246.9 24.4 249.8 25.6 249.8C26.4 249.7 26.8 248.6 27.2 247.8" fill="none" stroke="#555578" stroke-width="1.3"/>
<!-- smart fill -->
<path d="M16.2 262.6L19.8 266.2L16.2 269.8L12.6 266.2Z" fill="#fff" stroke="#40406a" stroke-width="1"/>
<path d="M13.4 266.4H19L16.2 269.2Z" fill="#f08000"/>
<path d="M15.6 261.4l1.6 1.6M17.2 261.4l-1.6 1.6" stroke="#40406a" stroke-width=".9"/>
<circle cx="17.2" cy="265.4" r=".8" fill="#40406a"/>
<path d="M19.6 266.8C21 266.8 21.6 267.4 21.6 268.6V273" fill="none" stroke="#f08000" stroke-width="1.3"/>
<rect x="21" y="272.6" width="4" height="2.6" fill="#f08000"/>
<rect x="18.6" y="273" width="6.2" height="4.4" fill="none" stroke="#46466c" stroke-width="1"/>
<rect x="21.4" y="270.5" width="6.2" height="4.4" fill="none" stroke="#46466c" stroke-width="1"/>
<!-- rectangle -->
<rect x="14.6" y="291.5" width="11.4" height="11" fill="url(#gpage)" stroke="#50506e" stroke-width="1.2"/>
<!-- ellipse -->
<circle cx="20.1" cy="323" r="5.7" fill="url(#gpage)" stroke="#50506e" stroke-width="1.2"/>
<!-- polygon -->
<path d="M13.4 349L16.6 343.4H23.4L26.6 349L23.4 354.4H16.6Z" fill="url(#gpage)" stroke="#50506e" stroke-width="1.2"/>
<!-- basic shapes -->
<path d="M13.6 371.4V378.6H20.6Z" fill="#f4f4fa" stroke="#50506e" stroke-width="1"/>
<circle cx="20.2" cy="370.2" r="3.3" fill="#fff" stroke="#50506e" stroke-width="1"/>
<rect x="20.4" y="374" width="6" height="6" fill="url(#gpage)" stroke="#50506e" stroke-width="1"/>
<!-- table -->
<rect x="13.6" y="421.6" width="13" height="11.6" fill="#fff" stroke="#50506e" stroke-width="1.1"/>
<path d="M14 424.5h12.4M14 427.5h12.4M14 430.5h12.4M17.8 422v11M22.4 422v11" stroke="#9c9cbe" stroke-width="1"/>
<rect x="14.2" y="427.9" width="11.8" height="2.2" fill="#dcdcea" opacity=".7"/>
<!-- blend -->
<rect x="13.6" y="445.4" width="5" height="5" fill="#fff" stroke="#46466c" stroke-width="1"/>
<rect x="16.8" y="448.8" width="6.4" height="6.4" fill="url(#gor2)" stroke="#50507a" stroke-width="1"/>
<rect x="20.6" y="452.8" width="6.6" height="6.6" fill="url(#gor)" stroke="#50507a" stroke-width="1"/>
<!-- eyedropper -->
<path d="M19.8 478.6L13.6 485.2" stroke="#4a8c78" stroke-width="2.2" stroke-linecap="round"/>
<path d="M19.6 478.8L14 484.8" stroke="#bfe0d6" stroke-width=".7"/>
<path d="M19 475.4L23 479.6" stroke="#20203a" stroke-width="2"/>
<circle cx="22.4" cy="475.8" r="2.5" fill="#22223c"/>
<path d="M23.4 474.8L26.2 472" stroke="#22223c" stroke-width="3.2" stroke-linecap="round"/>
<!-- outline pen -->
<g transform="translate(-682,407) ">
<path d="M702 90.2C700.6 92.5 698.3 97 698.4 99C698.6 100.6 699.8 101.4 700.2 102.4H703.8C704.2 101.4 705.4 100.6 705.6 99C705.7 97 703.4 92.5 702 90.2Z" fill="#fff" stroke="#40406a" stroke-width="1"/>
<path d="M702 92V98.4" stroke="#6a6a94" stroke-width=".8"/>
<circle cx="702" cy="99" r=".8" fill="#40406a"/>
<rect x="698" y="103" width="8" height="1.7" fill="#0c0c18"/>
</g>
<!-- fill bucket -->
<path d="M18.6 524.2L24.2 530.6L18 537.4L12.3 531.2Z" fill="#fff" stroke="#505078" stroke-width="1.1"/>
<path d="M13.4 532H23L18 537Z" fill="#f08000"/>
<path d="M17.4 522.4l2.4 2.4M19.8 522.4l-2.4 2.4M18.8 524.4L20 529" stroke="#40406a" stroke-width="1" fill="none"/>
<circle cx="20" cy="529.6" r="1" fill="#40406a"/>
<path d="M24 529.4C25.6 529.6 26.4 530.4 26.4 531.8V535.6" fill="none" stroke="#f08000" stroke-width="1.4"/>
<!-- bottom partial tool -->
<path d="M17.4 549.4l3.2 2.6M20.6 549.4l-3.2 2.6" stroke="#40406a" stroke-width="1"/>
</svg>

<div style="left:12px;top:389px;width:16px;height:20px;font-size:15px;line-height:20px;text-align:center;color:#5e5e74;font-weight:bold">字</div>
<div id="leftstrip"></div>
</body>
</html>
